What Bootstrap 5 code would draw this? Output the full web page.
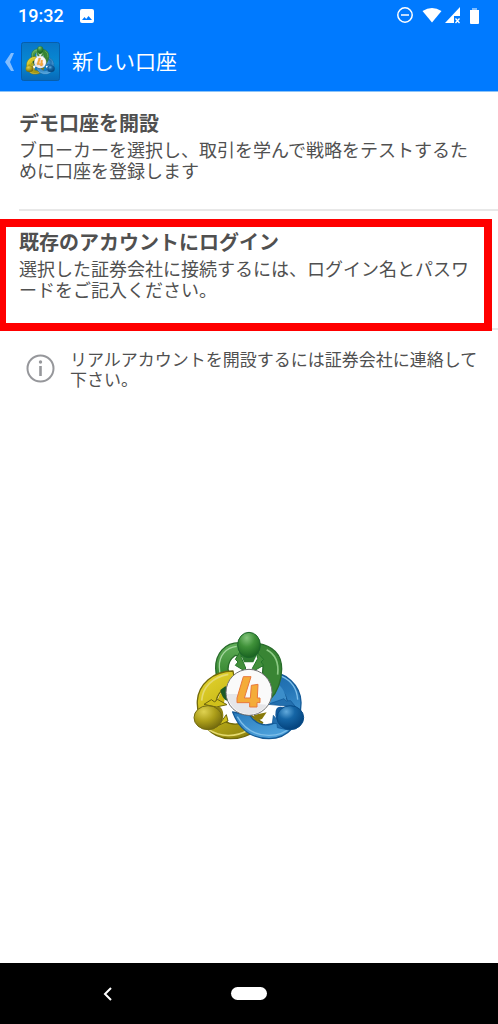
<!DOCTYPE html>
<html lang="ja">
<head>
<meta charset="utf-8">
<meta name="viewport" content="width=device-width, initial-scale=1">
<title>新しい口座</title>
<link href="https://cdn.jsdelivr.net/npm/bootstrap@5.3.0/dist/css/bootstrap.min.css" rel="stylesheet">
<style>
body { font-family: Roboto, "Noto Sans CJK JP", sans-serif; color: #505050; background: #fff; }
.top-area { background: #007aff; border-bottom: 1px solid #8cc3f7; }
.status-row { height: 32px; padding: 0 18px; font-size: 18px; font-weight: 500; line-height: 32px; }
.title-row { height: 59px; padding: 0 4px; }
.title-row h1 { font-size: 21px; line-height: 32px; padding-bottom: 3px; font-family: "Noto Sans CJK JP", sans-serif; font-weight: 400; }
.app-icon { width: 39px; height: 39px; }
.account-list, .notice { font-family: "Noto Sans CJK JP", sans-serif; }
.account-item { height: 119px; margin-left: 19px; padding: 17px 20px 0 0; border-bottom: 2px solid #e8e8e8; }
.account-item a { color: inherit; }
.account-item h2 { font-size: 20px; line-height: 28px; font-weight: 700; margin-bottom: 2px; }
.account-item p { font-size: 18px; line-height: 21px; }
.marker { top: 8px; right: 6px; bottom: -3px; left: -21px; border: 8px solid #f00; pointer-events: none; }
.notice { height: 78px; padding: 19px 19px 0 26px; gap: 15px; }
.notice p { font-size: 17px; line-height: 20px; }
.nav-row { height: 61px; background: #000; }
.nav-row button { background: none; border: 0; padding: 0; }
.home-pill { width: 36px; height: 13px; }
</style>
</head>
<body>
<div class="d-flex flex-column min-vh-100">
  <header class="top-area text-white">
    <div class="status-row d-flex align-items-center">
      <span>19:32</span>
      <svg class="ms-3" width="14" height="14" viewBox="0 0 14 14" aria-hidden="true"><rect width="14" height="14" rx="2" fill="#fff"/><path d="M2 11 4.500 8l1.700 2 2.300-3L12 11z" fill="#007aff"/></svg>
      <svg class="ms-auto" width="83" height="18" viewBox="-1 0 83 18" fill="#fff" aria-hidden="true">
        <g fill="none" stroke="#fff" stroke-width="1.500"><circle cx="7" cy="8" r="7.200"/><path d="M3 8h8"/></g>
        <path d="M24.500 4Q34 -2 43.500 4L34 15.500z"/>
        <path d="M62 0v9h-6v7H47z"/><path d="M57.500 11.500l4 4.500m0-4.500-4 4.500" stroke="#fff" stroke-width="1.300"/>
        <path d="M72 3h9v13q0 1-1 1h-7q-1 0-1-1z"/><path d="M74 1h5v2h-5z" opacity=".5"/>
      </svg>
    </div>
    <div class="title-row d-flex align-items-center">
      <button type="button" class="btn p-0 border-0 d-flex align-items-center" aria-label="戻る">
        <svg width="17" height="24" viewBox="0 0 17 24" aria-hidden="true"><path d="M7 3h3L6 12l4 9H7L1 12z" fill="#82bdff"/></svg>
        <svg class="app-icon" viewBox="0 0 39 39" aria-hidden="true">
          <defs><linearGradient id="tile" x2="0" y2="1"><stop stop-color="#0875c9"/><stop offset=".55" stop-color="#078ad3"/><stop offset="1" stop-color="#0868b7"/></linearGradient></defs>
          <rect x=".5" y=".5" width="38" height="38" rx="2" fill="url(#tile)" stroke="#075fac"/>
          <use href="#brand" transform="translate(1 1) scale(.088)"/>
        </svg>
      </button>
      <h1 class="mb-0 ms-2 ps-1">新しい口座</h1>
    </div>
  </header>
  <main class="flex-grow-1 d-flex flex-column">
    <section class="account-list">
      <div class="account-item">
        <a href="#demo" class="d-block text-decoration-none">
          <h2>デモ口座を開設</h2>
          <p class="mb-0">ブローカーを選択し、取引を学んで戦略をテストするために口座を登録します</p>
        </a>
      </div>
      <div class="account-item position-relative">
        <a href="#login" class="d-block text-decoration-none">
          <h2>既存のアカウントにログイン</h2>
          <p class="mb-0">選択した証券会社に接続するには、ログイン名とパスワードをご記入ください。</p>
        </a>
        <div class="marker position-absolute"></div>
      </div>
    </section>
    <div class="notice d-flex align-items-start">
      <svg class="flex-shrink-0 mt-1" width="29" height="30" viewBox="0 -1 29 30" aria-hidden="true"><circle cx="14.500" cy="14.500" r="13" fill="none" stroke="#96979b" stroke-width="2"/><path d="M14.500 12v10" stroke="#96979b" stroke-width="2.600"/><circle cx="14.500" cy="8" r="1.700" fill="#96979b"/></svg>
      <p class="mb-0">リアルアカウントを開設するには証券会社に連絡して下さい。</p>
    </div>
    <div class="flex-grow-1 d-flex align-items-center justify-content-center">
      <svg width="140" height="132" viewBox="-3 0 420 396" role="img" aria-label="MetaTrader 4">
        <defs>
          <linearGradient id="green" x2="0" y2="1"><stop stop-color="#62b05a"/><stop offset=".5" stop-color="#3c8c36"/><stop offset="1" stop-color="#236f27"/></linearGradient>
          <linearGradient id="yellow" x2=".7" y2="1"><stop stop-color="#e9d832"/><stop offset=".45" stop-color="#cdbd1c"/><stop offset="1" stop-color="#8f8410"/></linearGradient>
          <linearGradient id="blue" x2=".3" y2="1"><stop stop-color="#1762a3"/><stop offset=".5" stop-color="#2677b8"/><stop offset="1" stop-color="#4a9ed9"/></linearGradient>
          <radialGradient id="greenHead" cx=".4" cy=".22" r=".8"><stop stop-color="#84c57c"/><stop offset=".45" stop-color="#3f9139"/><stop offset="1" stop-color="#17611f"/></radialGradient>
          <radialGradient id="yellowHead" cx=".35" cy=".25" r=".8"><stop stop-color="#dfd251"/><stop offset=".5" stop-color="#ad9f1a"/><stop offset="1" stop-color="#6f660c"/></radialGradient>
          <radialGradient id="blueHead" cx=".35" cy=".25" r=".8"><stop stop-color="#62aadc"/><stop offset=".4" stop-color="#1565a5"/><stop offset="1" stop-color="#02407a"/></radialGradient>
        </defs>
        <g id="brand" stroke-linejoin="round">
          <path d="M165 100h80v70H165z" fill="#fff"/>
          <path d="M180 68C135 67 106 101 107 145c1 35 10 65 27 90l25-45-15-42q0-26 22-42l20 4z" fill="url(#green)" stroke="#286b2a" stroke-width="4"/>
          <path d="M170 79c-32 3-53 29-52 61 1 20 4 40 10 55" fill="none" stroke="#a6d6a0" stroke-width="4"/>
          <path d="M159 153c-59 0-104 40-107 90-3 62 41 113 99 113 44 0 76-20 97-48l-35-22c-16 20-33 28-53 26-31-3-53-29-52-61 1-28 22-54 58-58z" fill="url(#yellow)" stroke="#71690b" stroke-width="4"/>
          <path d="M145 163c-47 8-77 38-80 79M86 329c35 22 79 24 118 2" fill="none" stroke="#e5da70" stroke-width="5"/>
          <path d="M112 253q-1-35 29-48l-10 48z" fill="#cbb710"/>
          <path d="M121 210q5 28 22 33l-6-45z" fill="#1c5927"/>
          <path d="M222 285l38-8-14 20-22 8z" fill="#887a0b"/>
          <path d="M255 153c64 0 107 45 108 94 1 62-39 109-96 109-54 0-91-31-109-80l52 11c17 24 40 32 65 25 31-8 48-34 47-61-1-31-25-53-52-56z" fill="url(#blue)" stroke="#145a97" stroke-width="4"/>
          <path d="M305 169c30 13 46 40 48 70M172 290c22 38 55 57 96 56 31 0 49-9 67-26" fill="none" stroke="#7fbfe9" stroke-width="4"/>
          <path d="M272 185l-2 67 50-2q-4-52-38-63z" fill="#3c8eca"/>
          <path d="M117 256l45-2-27 49-18-10zM268 259l38-4-8 42-16-11z" fill="#fff"/>
          <path d="M233 70c47 8 72 35 72 77-1 39-12 68-34 91l-14 4-12-49 4-52-14-31z" fill="#398534" stroke="#286b2a" stroke-width="4"/>
          <path d="M260 89c29 15 37 40 33 75" fill="none" stroke="#8dca85" stroke-width="5"/>
          <path d="m181 94-15 24 8 8-8 10 28 17 3-9-13-31zm47 0 23 24-8 8 8 10-32 18-2-9 16-29z" fill="#438f3c" stroke="#24762a" stroke-width="3"/>
          <path d="M180 97q27-17 54 0l-14 30h-28z" fill="#2e7b31"/>
          <path d="m72 253 22-14 10 7 8-8 29 16-32 7zm54 49 13-18 5 19-28 13z" fill="#d0c01b" stroke="#6d650e" stroke-width="3"/>
          <path d="m264 253 48-17 6 7 14-1 16 20-32-4zm16 33-3 23 14 2 1 12 33 7-26-22z" fill="#236fae" stroke="#0d5594" stroke-width="2"/>
          <ellipse cx="207" cy="75" rx="34" ry="38" fill="url(#greenHead)" stroke="#1c662b" stroke-width="3"/>
          <path d="M103 264q25-14 27 22 0 23-22 28z" fill="#8f8312"/>
          <ellipse cx="84" cy="293" rx="42" ry="36" fill="url(#yellowHead)" stroke="#736b13" stroke-width="3"/>
          <path d="M310 262q-25-8-24 23 2 27 29 24z" fill="#12599b"/>
          <ellipse cx="331" cy="293" rx="40" ry="36" fill="url(#blueHead)" stroke="#084c88" stroke-width="3"/>
          <circle cx="207" cy="217" r="69" fill="#fafafa" stroke="#727274" stroke-width="3"/>
          <path d="M140 222h56l10 28 54 4c-24 43-105 41-120-32z" fill="#e6e6e9"/>
          <path d="M190 170h23l-20 64h18l3-38 20-3-2 41h8v14h-9v13h-22v-13h-38v-14z" fill="#f4ac39" stroke="#e9783c" stroke-width="3"/>
        </g>
      </svg>
    </div>
  </main>
  <nav class="nav-row row g-0 align-items-center" aria-label="システムナビゲーション">
    <div class="col-5 d-flex justify-content-center ps-2">
      <button type="button" aria-label="戻る"><svg class="d-block" width="12" height="14" viewBox="0 0 12 14" aria-hidden="true"><path d="M9 1 3 7l6 6" fill="none" stroke="#fff" stroke-width="2"/></svg></button>
    </div>
    <div class="col-2 d-flex justify-content-center">
      <button type="button" class="home-pill bg-white rounded-pill" aria-label="ホーム"></button>
    </div>
  </nav>
</div>
<script src="https://cdn.jsdelivr.net/npm/bootstrap@5.3.0/dist/js/bootstrap.bundle.min.js"></script>
</body>
</html>
